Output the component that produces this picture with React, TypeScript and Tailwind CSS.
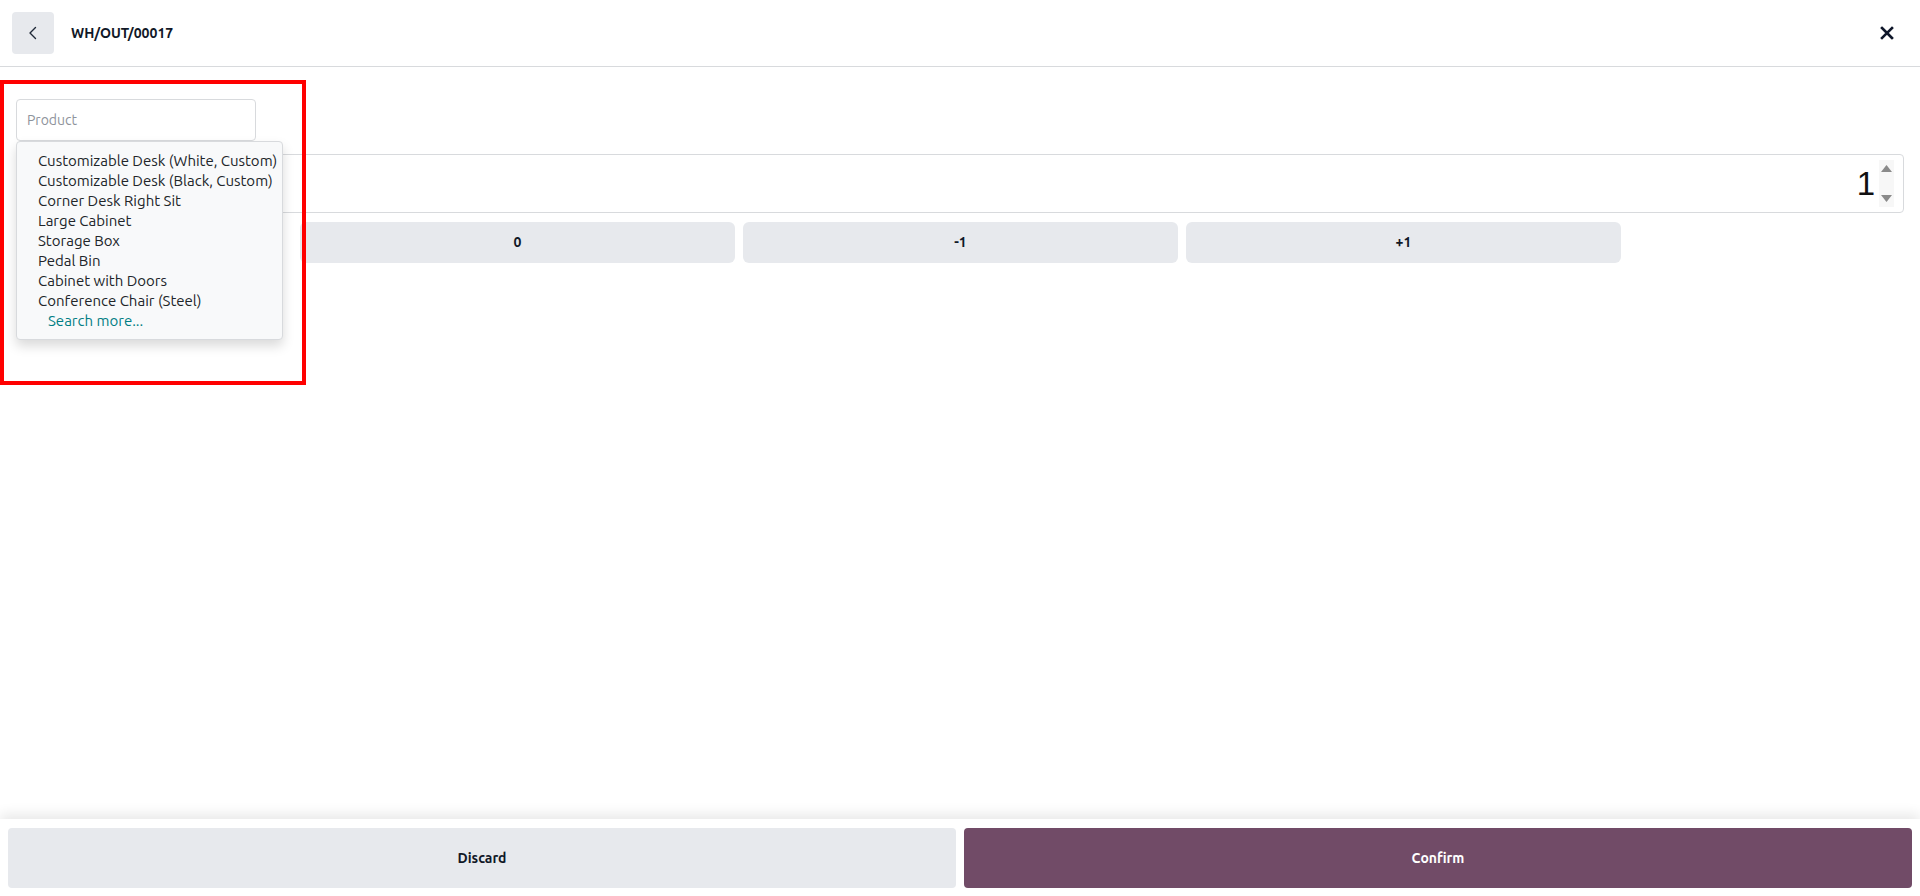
import React from "react";

const items = [
  "Customizable Desk (White, Custom)",
  "Customizable Desk (Black, Custom)",
  "Corner Desk Right Sit",
  "Large Cabinet",
  "Storage Box",
  "Pedal Bin",
  "Cabinet with Doors",
  "Conference Chair (Steel)",
];

export default function App() {
  return (
    <div className="relative flex h-[896px] w-[1920px] flex-col overflow-hidden bg-white font-['Ubuntu','Noto_Sans',sans-serif] text-[#111827]">
      {/* Header */}
      <header className="flex h-[67px] shrink-0 items-center border-b border-[#d8dadd] pl-3 pr-[26px]">
        <button className="flex h-[42px] w-[42px] items-center justify-center rounded bg-[#e7e9ed]">
          <svg width="16" height="16" viewBox="0 0 16 16" fill="none">
            <path d="M10.5 2.5 L5 8 L10.5 13.5" stroke="#1f2937" strokeWidth="1.4" strokeLinecap="round" strokeLinejoin="round" />
          </svg>
        </button>
        <div className="ml-[17px] text-[14px] font-bold text-[#111827]">WH/OUT/00017</div>
        <div className="flex-1" />
        <svg width="14" height="14" viewBox="0 0 14 14">
          <path d="M2 2 L12 12 M12 2 L2 12" stroke="#0f172a" strokeWidth="2.6" strokeLinecap="square" />
        </svg>
      </header>

      {/* Main */}
      <main className="relative flex-1 px-4 pt-8">
        <div className="flex h-[42px] w-[240px] items-center rounded border border-[#d8dadd] px-[10px] text-[14px] text-[#8e939b]">
          Product
        </div>

        <div className="mt-[13px] flex h-[59px] items-center justify-end rounded border border-[#d8dadd] pr-[9px]">
          <span className="font-['Liberation_Sans',Arial,sans-serif] text-[33px] leading-none text-[#111]">1</span>
          <div className="ml-[4px] flex h-[47px] w-[15px] flex-col items-center justify-between bg-[#f7f7f7] py-[5px]">
            <svg width="11" height="7" viewBox="0 0 11 7"><path d="M0 7 L5.5 0 L11 7 Z" fill="#8a8a8a" /></svg>
            <svg width="11" height="7" viewBox="0 0 11 7"><path d="M0 0 L5.5 7 L11 0 Z" fill="#8a8a8a" /></svg>
          </div>
        </div>

        <div className="mt-[9px] flex gap-2 pl-[284px]">
          {["0", "-1", "+1"].map((b) => (
            <button key={b} className="flex h-[41px] w-[435px] items-center justify-center rounded-md bg-[#e7e9ed] text-[14px] font-bold text-[#111827]">
              {b}
            </button>
          ))}
        </div>

        {/* Dropdown */}
        <div className="absolute left-4 top-[74px] w-[267px] rounded border border-[#d8dadd] bg-[#f8f9fa] pb-2 pt-[9px] shadow-[0_6px_12px_rgba(0,0,0,0.15)]">
          {items.map((t) => (
            <div key={t} className="h-5 whitespace-nowrap pl-[21px] text-[15px] leading-5 text-[#212529]">
              {t}
            </div>
          ))}
          <div className="h-5 pl-[31px] text-[15px] leading-5 text-[#017e84]">Search more...</div>
        </div>

        {/* Annotation box */}
        <div className="pointer-events-none absolute left-0 top-[13px] h-[305px] w-[306px] border-4 border-[#ff0000]" />
      </main>

      {/* Footer */}
      <footer className="flex h-[77px] shrink-0 gap-2 bg-white px-2 pb-2 pt-[9px] shadow-[0_-5px_12px_rgba(0,0,0,0.09)]">
        <button className="flex flex-1 items-center justify-center rounded bg-[#e7e9ed] text-[14px] font-semibold text-[#111827]">
          Discard
        </button>
        <button className="flex flex-1 items-center justify-center rounded bg-[#714b67] text-[14px] font-semibold text-white">
          Confirm
        </button>
      </footer>
    </div>
  );
}
